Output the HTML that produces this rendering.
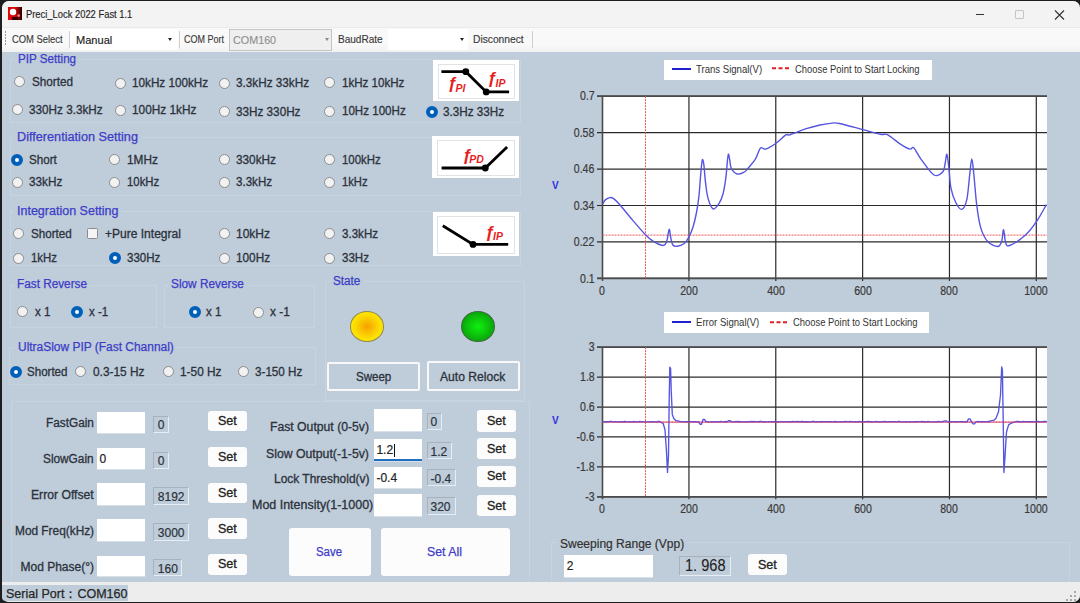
<!DOCTYPE html>
<html><head><meta charset="utf-8">
<style>
*{margin:0;padding:0;box-sizing:border-box}
html,body{width:1080px;height:603px;overflow:hidden;background:#1e1e1e;font-family:"Liberation Sans",sans-serif}
#page{position:relative;width:1080px;height:603px;overflow:hidden}
.a{position:absolute;white-space:nowrap}
.grp{position:absolute;border:1px solid #c7d3df}
.r{position:absolute;width:11px;height:11px;border-radius:50%;background:#f2f2f2;border:1px solid #8c8c8c}
.rc{position:absolute;width:12px;height:12px;border-radius:50%;background:#fff;border:4px solid #005fb8}
.tb{position:absolute;background:#fff;box-shadow:0 1px 0 #d9e0e8}
.vb{position:absolute;border-top:1px solid #a9b2bc;border-left:1px solid #a9b2bc;border-right:1px solid #e6edf4;border-bottom:1px solid #e6edf4}
.btn{position:absolute;background:#fcfcfc;border-radius:3px}
.ax{font-size:12px;color:#3a3a3a;line-height:12px;-webkit-text-stroke:0.2px #3a3a3a;transform:scaleX(0.88)}
.leg{font-size:11px;color:#333;line-height:12px;transform:scaleX(0.87);transform-origin:0 0}
</style></head><body><div id="page">

<div class="a" style="left:1.5px;top:1.3px;width:1078px;height:600.4px;background:#bfccd9;border-radius:7px"></div>
<div class="a" style="left:1.5px;top:1.3px;width:1078px;height:25.4px;background:#f3f3f3;border-radius:7px 7px 0 0"></div>
<svg class="a" style="left:8px;top:7px" width="14" height="13.4" viewBox="0 0 14 13.4"><defs><linearGradient id="ig" x1="0" y1="0" x2="1" y2="0"><stop offset="0" stop-color="#e00808"/><stop offset="0.55" stop-color="#d00808"/><stop offset="1" stop-color="#200000"/></linearGradient></defs><rect x="0" y="0" width="14" height="13.4" fill="url(#ig)"/><rect x="4" y="10" width="6" height="3.4" fill="#1a0000" opacity="0.85"/><circle cx="5" cy="5" r="3.2" fill="#fff"/><circle cx="10.7" cy="8.6" r="1.3" fill="#ff8080"/></svg>
<div class="a" style="left:25.60px;top:6.86px;font-size:10.5px;line-height:14px;color:#1f1f1f;-webkit-text-stroke:0.15px #1f1f1f;transform:scaleX(0.8928);transform-origin:0 0;">Preci_Lock 2022 Fast 1.1</div>
<div class="a" style="left:975.5px;top:13.5px;width:8.5px;height:1.2px;background:#333"></div>
<div class="a" style="left:1015px;top:10px;width:8.5px;height:8.5px;border:1px solid #c4c4c4;border-radius:1px"></div>
<svg class="a" style="left:1054px;top:9.5px" width="11" height="10" viewBox="0 0 11 10"><path d="M1 0.5 L10 9.5 M10 0.5 L1 9.5" stroke="#333" stroke-width="1.1"/></svg>
<div class="a" style="left:1.5px;top:26.7px;width:1078px;height:25px;background:linear-gradient(#f9f9f9 0%,#f9f9f9 70%,#f1f1f1 100%);border-top:1px solid #e9e9e9"></div>
<div class="a" style="left:4.5px;top:31px;width:1.5px;height:1.5px;background:#999"></div>
<div class="a" style="left:4.5px;top:34px;width:1.5px;height:1.5px;background:#999"></div>
<div class="a" style="left:4.5px;top:37px;width:1.5px;height:1.5px;background:#999"></div>
<div class="a" style="left:4.5px;top:40px;width:1.5px;height:1.5px;background:#999"></div>
<div class="a" style="left:4.5px;top:43px;width:1.5px;height:1.5px;background:#999"></div>
<div class="a" style="left:11.90px;top:32.46px;font-size:10.5px;line-height:14px;color:#3a3a3a;-webkit-text-stroke:0.15px #3a3a3a;transform:scaleX(0.8941);transform-origin:0 0;">COM Select</div>
<div class="a" style="left:69px;top:31px;width:1px;height:17px;background:#cfcfcf"></div>
<div class="a" style="left:70px;top:29px;width:108px;height:21px;background:#fff"></div>
<div class="a" style="left:75.60px;top:32.94px;font-size:11px;line-height:14px;color:#222;-webkit-text-stroke:0.15px #222;transform:scaleX(1.0061);transform-origin:0 0;">Manual</div>
<div class="a" style="left:167.5px;top:38px;width:0;height:0;border-left:2.5px solid transparent;border-right:2.5px solid transparent;border-top:3px solid #222"></div>
<div class="a" style="left:179px;top:31px;width:1px;height:17px;background:#cfcfcf"></div>
<div class="a" style="left:184.00px;top:32.46px;font-size:10.5px;line-height:14px;color:#3a3a3a;-webkit-text-stroke:0.15px #3a3a3a;transform:scaleX(0.8570);transform-origin:0 0;">COM Port</div>
<div class="a" style="left:229px;top:29px;width:103px;height:21.5px;background:#efefef;border:1px solid #c4c4c4"></div>
<div class="a" style="left:232.50px;top:32.69px;font-size:11px;line-height:14px;color:#8d8d8d;-webkit-text-stroke:0.1px #8d8d8d;transform:scaleX(0.9795);transform-origin:0 0;">COM160</div>
<div class="a" style="left:324.5px;top:38px;width:0;height:0;border-left:2.5px solid transparent;border-right:2.5px solid transparent;border-top:3px solid #888"></div>
<div class="a" style="left:337.80px;top:32.46px;font-size:10.5px;line-height:14px;color:#3a3a3a;-webkit-text-stroke:0.15px #3a3a3a;transform:scaleX(0.9567);transform-origin:0 0;">BaudRate</div>
<div class="a" style="left:388px;top:29px;width:80px;height:21px;background:#fff"></div>
<div class="a" style="left:459.5px;top:38px;width:0;height:0;border-left:2.5px solid transparent;border-right:2.5px solid transparent;border-top:3px solid #222"></div>
<div class="a" style="left:473.00px;top:32.46px;font-size:10.5px;line-height:14px;color:#3a3a3a;-webkit-text-stroke:0.15px #3a3a3a;transform:scaleX(0.9745);transform-origin:0 0;">Disconnect</div>
<div class="a" style="left:531.5px;top:31px;width:1px;height:17px;background:#cfcfcf"></div>
<div class="grp" style="left:10px;top:59px;width:511px;height:64px"></div>
<div class="a" style="left:14.899999999999999px;top:52px;width:64.1px;height:13px;background:#bfccd9"></div>
<div class="a" style="left:17.90px;top:50.84px;font-size:12px;line-height:16px;color:#3c3cc8;-webkit-text-stroke:0.25px #3c3cc8;transform:scaleX(0.9712);transform-origin:0 0;">PIP Setting</div>
<div class="r" style="left:14.0px;top:76.1px"></div>
<div class="a" style="left:31.50px;top:73.64px;font-size:12px;line-height:16px;color:#2b323c;-webkit-text-stroke:0.3px #2b323c;transform:scaleX(0.9748);transform-origin:0 0;">Shorted</div>
<div class="r" style="left:114.8px;top:77.6px"></div>
<div class="a" style="left:132.40px;top:75.44px;font-size:12px;line-height:16px;color:#2b323c;-webkit-text-stroke:0.3px #2b323c;transform:scaleX(0.9762);transform-origin:0 0;">10kHz 100kHz</div>
<div class="r" style="left:218.5px;top:77.5px"></div>
<div class="a" style="left:236.30px;top:75.34px;font-size:12px;line-height:16px;color:#2b323c;-webkit-text-stroke:0.3px #2b323c;transform:scaleX(0.9772);transform-origin:0 0;">3.3kHz 33kHz</div>
<div class="r" style="left:323.9px;top:77.0px"></div>
<div class="a" style="left:341.60px;top:74.84px;font-size:12px;line-height:16px;color:#2b323c;-webkit-text-stroke:0.3px #2b323c;transform:scaleX(0.9647);transform-origin:0 0;">1kHz 10kHz</div>
<div class="r" style="left:12.0px;top:104.3px"></div>
<div class="a" style="left:29.20px;top:102.34px;font-size:12px;line-height:16px;color:#2b323c;-webkit-text-stroke:0.3px #2b323c;transform:scaleX(0.9780);transform-origin:0 0;">330Hz 3.3kHz</div>
<div class="r" style="left:115.0px;top:104.6px"></div>
<div class="a" style="left:132.40px;top:102.44px;font-size:12px;line-height:16px;color:#2b323c;-webkit-text-stroke:0.3px #2b323c;transform:scaleX(0.9871);transform-origin:0 0;">100Hz 1kHz</div>
<div class="r" style="left:218.5px;top:106.3px"></div>
<div class="a" style="left:236.30px;top:104.14px;font-size:12px;line-height:16px;color:#2b323c;-webkit-text-stroke:0.3px #2b323c;transform:scaleX(0.9764);transform-origin:0 0;">33Hz 330Hz</div>
<div class="r" style="left:323.9px;top:105.5px"></div>
<div class="a" style="left:341.60px;top:103.34px;font-size:12px;line-height:16px;color:#2b323c;-webkit-text-stroke:0.3px #2b323c;transform:scaleX(0.9643);transform-origin:0 0;">10Hz 100Hz</div>
<div class="rc" style="left:426px;top:105.5px"></div>
<div class="a" style="left:443.40px;top:103.84px;font-size:12px;line-height:16px;color:#2b323c;-webkit-text-stroke:0.3px #2b323c;transform:scaleX(0.9745);transform-origin:0 0;">3.3Hz 33Hz</div>
<div class="grp" style="left:10px;top:137px;width:511px;height:59px"></div>
<div class="a" style="left:14px;top:129.7px;width:127px;height:13px;background:#bfccd9"></div>
<div class="a" style="left:17.00px;top:128.54px;font-size:12px;line-height:16px;color:#3c3cc8;-webkit-text-stroke:0.25px #3c3cc8;transform:scaleX(1.0564);transform-origin:0 0;">Differentiation Setting</div>
<div class="rc" style="left:11px;top:153.6px"></div>
<div class="a" style="left:28.70px;top:151.94px;font-size:12px;line-height:16px;color:#2b323c;-webkit-text-stroke:0.3px #2b323c;transform:scaleX(0.9693);transform-origin:0 0;">Short</div>
<div class="r" style="left:109.3px;top:154.1px"></div>
<div class="a" style="left:127.40px;top:151.94px;font-size:12px;line-height:16px;color:#2b323c;-webkit-text-stroke:0.3px #2b323c;transform:scaleX(0.9866);transform-origin:0 0;">1MHz</div>
<div class="r" style="left:218.5px;top:154.1px"></div>
<div class="a" style="left:236.00px;top:151.94px;font-size:12px;line-height:16px;color:#2b323c;-webkit-text-stroke:0.3px #2b323c;transform:scaleX(0.9833);transform-origin:0 0;">330kHz</div>
<div class="r" style="left:323.5px;top:154.1px"></div>
<div class="a" style="left:341.70px;top:151.94px;font-size:12px;line-height:16px;color:#2b323c;-webkit-text-stroke:0.3px #2b323c;transform:scaleX(0.9538);transform-origin:0 0;">100kHz</div>
<div class="r" style="left:11.5px;top:176.5px"></div>
<div class="a" style="left:28.70px;top:174.34px;font-size:12px;line-height:16px;color:#2b323c;-webkit-text-stroke:0.3px #2b323c;transform:scaleX(0.9788);transform-origin:0 0;">33kHz</div>
<div class="r" style="left:109.3px;top:176.5px"></div>
<div class="a" style="left:127.40px;top:174.34px;font-size:12px;line-height:16px;color:#2b323c;-webkit-text-stroke:0.3px #2b323c;transform:scaleX(0.9465);transform-origin:0 0;">10kHz</div>
<div class="r" style="left:218.5px;top:176.5px"></div>
<div class="a" style="left:236.00px;top:174.34px;font-size:12px;line-height:16px;color:#2b323c;-webkit-text-stroke:0.3px #2b323c;transform:scaleX(0.9646);transform-origin:0 0;">3.3kHz</div>
<div class="r" style="left:323.5px;top:176.5px"></div>
<div class="a" style="left:341.70px;top:174.34px;font-size:12px;line-height:16px;color:#2b323c;-webkit-text-stroke:0.3px #2b323c;transform:scaleX(0.9320);transform-origin:0 0;">1kHz</div>
<div class="grp" style="left:10px;top:211px;width:511px;height:55px"></div>
<div class="a" style="left:14px;top:204.4px;width:107.5px;height:13px;background:#bfccd9"></div>
<div class="a" style="left:17.00px;top:203.24px;font-size:12px;line-height:16px;color:#3c3cc8;-webkit-text-stroke:0.25px #3c3cc8;transform:scaleX(1.0423);transform-origin:0 0;">Integration Setting</div>
<div class="r" style="left:13.0px;top:228.4px"></div>
<div class="a" style="left:30.50px;top:226.24px;font-size:12px;line-height:16px;color:#2b323c;-webkit-text-stroke:0.3px #2b323c;transform:scaleX(0.9700);transform-origin:0 0;">Shorted</div>
<div class="a" style="left:87px;top:228.3px;width:10.5px;height:10.5px;background:#f4f4f4;border:1px solid #8c8c8c;border-radius:1.5px"></div>
<div class="a" style="left:104.60px;top:226.24px;font-size:12px;line-height:16px;color:#2b323c;-webkit-text-stroke:0.3px #2b323c;transform:scaleX(1.0024);transform-origin:0 0;">+Pure Integral</div>
<div class="r" style="left:218.5px;top:228.4px"></div>
<div class="a" style="left:236.00px;top:226.24px;font-size:12px;line-height:16px;color:#2b323c;-webkit-text-stroke:0.3px #2b323c;transform:scaleX(0.9994);transform-origin:0 0;">10kHz</div>
<div class="r" style="left:323.5px;top:228.4px"></div>
<div class="a" style="left:341.50px;top:226.24px;font-size:12px;line-height:16px;color:#2b323c;-webkit-text-stroke:0.3px #2b323c;transform:scaleX(0.9646);transform-origin:0 0;">3.3kHz</div>
<div class="r" style="left:13.0px;top:252.5px"></div>
<div class="a" style="left:30.50px;top:250.34px;font-size:12px;line-height:16px;color:#2b323c;-webkit-text-stroke:0.3px #2b323c;transform:scaleX(0.9503);transform-origin:0 0;">1kHz</div>
<div class="rc" style="left:108.8px;top:252px"></div>
<div class="a" style="left:127.40px;top:250.34px;font-size:12px;line-height:16px;color:#2b323c;-webkit-text-stroke:0.3px #2b323c;transform:scaleX(0.9602);transform-origin:0 0;">330Hz</div>
<div class="r" style="left:218.5px;top:252.5px"></div>
<div class="a" style="left:236.00px;top:250.34px;font-size:12px;line-height:16px;color:#2b323c;-webkit-text-stroke:0.3px #2b323c;transform:scaleX(0.9804);transform-origin:0 0;">100Hz</div>
<div class="r" style="left:323.5px;top:252.5px"></div>
<div class="a" style="left:341.50px;top:250.34px;font-size:12px;line-height:16px;color:#2b323c;-webkit-text-stroke:0.3px #2b323c;transform:scaleX(0.9636);transform-origin:0 0;">33Hz</div>
<div class="a" style="left:433.2px;top:59.5px;width:86.20px;height:41.30px;background:#fff"></div>
<div class="a" style="left:437.7px;top:63.5px;width:77.20px;height:35.30px;border:1px solid #e2e2e2"></div>
<svg class="a" style="left:0;top:0" width="1080" height="603"><path d="M441.4 71.7 H465.8 L486.2 91.9 H509.1" fill="none" stroke="#000" stroke-width="2.8"/><circle cx="465.8" cy="71.7" r="3.4" fill="#000"/><circle cx="486.2" cy="91.9" r="3.4" fill="#000"/><text x="447.6" y="88.5" style="font-family:'Liberation Sans',sans-serif;font-style:italic;font-weight:bold;fill:#e81e1e;font-size:17px">&#402;</text><text x="455.6" y="91.9" style="font-family:'Liberation Sans',sans-serif;font-style:italic;font-weight:bold;fill:#e81e1e;font-size:10.5px">PI</text><text x="487.2" y="84" style="font-family:'Liberation Sans',sans-serif;font-style:italic;font-weight:bold;fill:#e81e1e;font-size:17px">&#402;</text><text x="495.6" y="87.0" style="font-family:'Liberation Sans',sans-serif;font-style:italic;font-weight:bold;fill:#e81e1e;font-size:10.5px">IP</text></svg>
<div class="a" style="left:432.4px;top:136.2px;width:87.00px;height:42.30px;background:#fff"></div>
<div class="a" style="left:436.9px;top:140.2px;width:78.00px;height:36.30px;border:1px solid #e2e2e2"></div>
<svg class="a" style="left:0;top:0" width="1080" height="603"><path d="M441.6 168 H485.3 L507.1 147" fill="none" stroke="#000" stroke-width="2.8"/><circle cx="485.3" cy="168" r="3.4" fill="#000"/><text x="462.3" y="160.8" style="font-family:'Liberation Sans',sans-serif;font-style:italic;font-weight:bold;fill:#e81e1e;font-size:17px">&#402;</text><text x="469.3" y="163.3" style="font-family:'Liberation Sans',sans-serif;font-style:italic;font-weight:bold;fill:#e81e1e;font-size:10.5px">PD</text></svg>
<div class="a" style="left:432.9px;top:212px;width:86.50px;height:44.30px;background:#fff"></div>
<div class="a" style="left:437.4px;top:216px;width:77.50px;height:38.30px;border:1px solid #e2e2e2"></div>
<svg class="a" style="left:0;top:0" width="1080" height="603"><path d="M442.8 225.7 L473 244.4 H508.2" fill="none" stroke="#000" stroke-width="2.8"/><circle cx="473" cy="244.4" r="3.4" fill="#000"/><text x="484.9" y="238" style="font-family:'Liberation Sans',sans-serif;font-style:italic;font-weight:bold;fill:#e81e1e;font-size:17px">&#402;</text><text x="493" y="240.4" style="font-family:'Liberation Sans',sans-serif;font-style:italic;font-weight:bold;fill:#e81e1e;font-size:10.5px">IP</text></svg>
<div class="grp" style="left:10px;top:285px;width:147px;height:43px"></div>
<div class="a" style="left:14px;top:277px;width:76px;height:13px;background:#bfccd9"></div>
<div class="a" style="left:17.00px;top:275.84px;font-size:12px;line-height:16px;color:#3c3cc8;-webkit-text-stroke:0.25px #3c3cc8;transform:scaleX(0.9812);transform-origin:0 0;">Fast Reverse</div>
<div class="r" style="left:17.3px;top:306.1px"></div>
<div class="a" style="left:34.60px;top:303.94px;font-size:12px;line-height:16px;color:#2b323c;-webkit-text-stroke:0.3px #2b323c;transform:scaleX(0.9613);transform-origin:0 0;">x 1</div>
<div class="rc" style="left:71.4px;top:305.6px"></div>
<div class="a" style="left:89.40px;top:303.94px;font-size:12px;line-height:16px;color:#2b323c;-webkit-text-stroke:0.3px #2b323c;transform:scaleX(0.9610);transform-origin:0 0;">x -1</div>
<div class="grp" style="left:163.5px;top:285px;width:151.5px;height:43px"></div>
<div class="a" style="left:168.3px;top:277px;width:78.89999999999998px;height:13px;background:#bfccd9"></div>
<div class="a" style="left:171.30px;top:275.84px;font-size:12px;line-height:16px;color:#3c3cc8;-webkit-text-stroke:0.25px #3c3cc8;transform:scaleX(0.9846);transform-origin:0 0;">Slow Reverse</div>
<div class="rc" style="left:188.7px;top:306px"></div>
<div class="a" style="left:206.30px;top:304.34px;font-size:12px;line-height:16px;color:#2b323c;-webkit-text-stroke:0.3px #2b323c;transform:scaleX(0.9613);transform-origin:0 0;">x 1</div>
<div class="r" style="left:252.8px;top:306.5px"></div>
<div class="a" style="left:269.70px;top:304.34px;font-size:12px;line-height:16px;color:#2b323c;-webkit-text-stroke:0.3px #2b323c;transform:scaleX(1.0010);transform-origin:0 0;">x -1</div>
<div class="grp" style="left:9px;top:347px;width:306.5px;height:38px"></div>
<div class="a" style="left:14.5px;top:340px;width:161.8px;height:13px;background:#bfccd9"></div>
<div class="a" style="left:17.50px;top:338.84px;font-size:12px;line-height:16px;color:#3c3cc8;-webkit-text-stroke:0.25px #3c3cc8;transform:scaleX(0.9957);transform-origin:0 0;">UltraSlow PIP (Fast Channal)</div>
<div class="rc" style="left:9.6px;top:365.7px"></div>
<div class="a" style="left:27.40px;top:364.04px;font-size:12px;line-height:16px;color:#2b323c;-webkit-text-stroke:0.3px #2b323c;transform:scaleX(0.9629);transform-origin:0 0;">Shorted</div>
<div class="r" style="left:75.2px;top:366.2px"></div>
<div class="a" style="left:93.00px;top:364.04px;font-size:12px;line-height:16px;color:#2b323c;-webkit-text-stroke:0.3px #2b323c;transform:scaleX(0.9881);transform-origin:0 0;">0.3-15 Hz</div>
<div class="r" style="left:162.5px;top:366.2px"></div>
<div class="a" style="left:180.10px;top:364.04px;font-size:12px;line-height:16px;color:#2b323c;-webkit-text-stroke:0.3px #2b323c;transform:scaleX(0.9881);transform-origin:0 0;">1-50 Hz</div>
<div class="r" style="left:237.5px;top:366.2px"></div>
<div class="a" style="left:255.40px;top:364.04px;font-size:12px;line-height:16px;color:#2b323c;-webkit-text-stroke:0.3px #2b323c;transform:scaleX(0.9729);transform-origin:0 0;">3-150 Hz</div>
<div class="grp" style="left:324.8px;top:280.8px;width:199.8px;height:120.19999999999999px"></div>
<div class="a" style="left:329.5px;top:274.1px;width:33.30000000000001px;height:13px;background:#bfccd9"></div>
<div class="a" style="left:332.50px;top:272.94px;font-size:12px;line-height:16px;color:#3c3cc8;-webkit-text-stroke:0.25px #3c3cc8;transform:scaleX(0.9743);transform-origin:0 0;">State</div>
<div class="a" style="left:349.5px;top:311px;width:34.5px;height:31.2px;border-radius:50%;border:1.3px solid #8c8a52;background:radial-gradient(ellipse at 50% 50%,#f6a000 0%,#f9c200 30%,#fde000 60%,#ffe800 100%)"></div>
<div class="a" style="left:460.6px;top:311px;width:34.2px;height:31.2px;border-radius:50%;border:1.3px solid #3a6a3a;background:radial-gradient(ellipse at 50% 50%,#10f010 0%,#0cc80c 40%,#089808 85%,#087a10 100%)"></div>
<div class="a" style="left:327.3px;top:361.7px;width:93px;height:29.7px;border:2px solid #f8f8f8;border-radius:2px"></div>
<div class="a" style="left:355.70px;top:368.84px;font-size:12px;line-height:16px;color:#2b323c;-webkit-text-stroke:0.3px #2b323c;transform:scaleX(0.9613);transform-origin:0 0;">Sweep</div>
<div class="a" style="left:427.3px;top:361px;width:92.5px;height:30px;border:2px solid #f8f8f8;border-radius:2px"></div>
<div class="a" style="left:440.30px;top:368.84px;font-size:12px;line-height:16px;color:#2b323c;-webkit-text-stroke:0.3px #2b323c;transform:scaleX(1.0086);transform-origin:0 0;">Auto Relock</div>
<div class="grp" style="left:10.8px;top:400.8px;width:519.2px;height:189.2px"></div>
<div class="a" style="left:46.10px;top:414.84px;font-size:12px;line-height:16px;color:#2b323c;-webkit-text-stroke:0.3px #2b323c;transform:scaleX(0.9844);transform-origin:0 0;">FastGain</div>
<div class="tb" style="left:97.4px;top:411.7px;width:47.70px;height:21.80px;"></div>
<div class="vb" style="left:153.1px;top:415.9px;width:16.10px;height:17.20px;"></div>
<div class="a" style="left:157.80px;top:417.44px;font-size:12px;line-height:16px;color:#2b323c;-webkit-text-stroke:0.2px #2b323c;transform:scaleX(1.0000);transform-origin:0 0;">0</div>
<div class="btn" style="left:208.2px;top:410.5px;width:39.00px;height:20.90px;"></div>
<div class="a" style="left:218.30px;top:413.09px;font-size:12px;line-height:16px;color:#222;-webkit-text-stroke:0.3px #222;transform:scaleX(1.0444);transform-origin:0 0;">Set</div>
<div class="a" style="left:43.40px;top:450.94px;font-size:12px;line-height:16px;color:#2b323c;-webkit-text-stroke:0.3px #2b323c;transform:scaleX(0.9852);transform-origin:0 0;">SlowGain</div>
<div class="tb" style="left:97.4px;top:447.8px;width:47.70px;height:21.40px;"></div>
<div class="a" style="left:99.40px;top:450.94px;font-size:12px;line-height:16px;color:#222;-webkit-text-stroke:0.2px #222;transform:scaleX(1.0000);transform-origin:0 0;">0</div>
<div class="vb" style="left:153.1px;top:451.6px;width:16.10px;height:17.60px;"></div>
<div class="a" style="left:157.80px;top:453.14px;font-size:12px;line-height:16px;color:#2b323c;-webkit-text-stroke:0.2px #2b323c;transform:scaleX(1.0000);transform-origin:0 0;">0</div>
<div class="btn" style="left:208.2px;top:446.6px;width:39.00px;height:20.90px;"></div>
<div class="a" style="left:218.30px;top:449.19px;font-size:12px;line-height:16px;color:#222;-webkit-text-stroke:0.3px #222;transform:scaleX(1.0444);transform-origin:0 0;">Set</div>
<div class="a" style="left:31.30px;top:486.54px;font-size:12px;line-height:16px;color:#2b323c;-webkit-text-stroke:0.3px #2b323c;transform:scaleX(1.0146);transform-origin:0 0;">Error Offset</div>
<div class="tb" style="left:97.4px;top:483.2px;width:47.70px;height:21.70px;"></div>
<div class="vb" style="left:153.1px;top:487.3px;width:36.40px;height:17.70px;"></div>
<div class="a" style="left:157.80px;top:488.84px;font-size:12px;line-height:16px;color:#2b323c;-webkit-text-stroke:0.2px #2b323c;transform:scaleX(1.0000);transform-origin:0 0;">8192</div>
<div class="btn" style="left:208.2px;top:482.5px;width:39.00px;height:20.50px;"></div>
<div class="a" style="left:218.30px;top:484.89px;font-size:12px;line-height:16px;color:#222;-webkit-text-stroke:0.3px #222;transform:scaleX(1.0444);transform-origin:0 0;">Set</div>
<div class="a" style="left:14.90px;top:522.64px;font-size:12px;line-height:16px;color:#2b323c;-webkit-text-stroke:0.3px #2b323c;transform:scaleX(0.9883);transform-origin:0 0;">Mod Freq(kHz)</div>
<div class="tb" style="left:97.4px;top:519.3px;width:47.70px;height:21.70px;"></div>
<div class="vb" style="left:153.1px;top:523.4px;width:36.40px;height:17.60px;"></div>
<div class="a" style="left:157.80px;top:524.94px;font-size:12px;line-height:16px;color:#2b323c;-webkit-text-stroke:0.2px #2b323c;transform:scaleX(1.0000);transform-origin:0 0;">3000</div>
<div class="btn" style="left:208.2px;top:518.1px;width:39.00px;height:21.00px;"></div>
<div class="a" style="left:218.30px;top:520.74px;font-size:12px;line-height:16px;color:#222;-webkit-text-stroke:0.3px #222;transform:scaleX(1.0444);transform-origin:0 0;">Set</div>
<div class="a" style="left:20.50px;top:558.74px;font-size:12px;line-height:16px;color:#2b323c;-webkit-text-stroke:0.3px #2b323c;transform:scaleX(1.0000);transform-origin:0 0;">Mod Phase(°)</div>
<div class="tb" style="left:97.4px;top:555.5px;width:47.70px;height:20.90px;"></div>
<div class="vb" style="left:153.1px;top:559px;width:29.10px;height:17.40px;"></div>
<div class="a" style="left:157.80px;top:560.54px;font-size:12px;line-height:16px;color:#2b323c;-webkit-text-stroke:0.2px #2b323c;transform:scaleX(1.0000);transform-origin:0 0;">160</div>
<div class="btn" style="left:208.2px;top:553.8px;width:39.00px;height:20.90px;"></div>
<div class="a" style="left:218.30px;top:556.39px;font-size:12px;line-height:16px;color:#222;-webkit-text-stroke:0.3px #222;transform:scaleX(1.0444);transform-origin:0 0;">Set</div>
<div class="a" style="left:270.00px;top:418.84px;font-size:12px;line-height:16px;color:#2b323c;-webkit-text-stroke:0.3px #2b323c;transform:scaleX(1.0166);transform-origin:0 0;">Fast Output (0-5v)</div>
<div class="tb" style="left:374.3px;top:409.2px;width:47.50px;height:21.90px;"></div>
<div class="vb" style="left:426.6px;top:412.7px;width:15.00px;height:17.70px;"></div>
<div class="a" style="left:430.50px;top:414.24px;font-size:12px;line-height:16px;color:#2b323c;-webkit-text-stroke:0.2px #2b323c;transform:scaleX(1.0000);transform-origin:0 0;">0</div>
<div class="btn" style="left:477.3px;top:410px;width:39.00px;height:21.70px;"></div>
<div class="a" style="left:487.40px;top:412.99px;font-size:12px;line-height:16px;color:#222;-webkit-text-stroke:0.3px #222;transform:scaleX(1.0444);transform-origin:0 0;">Set</div>
<div class="a" style="left:266.10px;top:446.04px;font-size:12px;line-height:16px;color:#2b323c;-webkit-text-stroke:0.3px #2b323c;transform:scaleX(1.0221);transform-origin:0 0;">Slow Output(-1-5v)</div>
<div class="tb" style="left:374.3px;top:439px;width:47.50px;height:21.70px;"></div>
<div class="a" style="left:376.40px;top:442.14px;font-size:12px;line-height:16px;color:#222;-webkit-text-stroke:0.2px #222;transform:scaleX(1.0000);transform-origin:0 0;">1.2</div>
<div class="vb" style="left:426.6px;top:442.2px;width:25.60px;height:16.40px;"></div>
<div class="a" style="left:430.50px;top:443.74px;font-size:12px;line-height:16px;color:#2b323c;-webkit-text-stroke:0.2px #2b323c;transform:scaleX(1.0000);transform-origin:0 0;">1.2</div>
<div class="btn" style="left:477.3px;top:438.3px;width:39.00px;height:20.30px;"></div>
<div class="a" style="left:487.40px;top:440.59px;font-size:12px;line-height:16px;color:#222;-webkit-text-stroke:0.3px #222;transform:scaleX(1.0444);transform-origin:0 0;">Set</div>
<div class="a" style="left:273.50px;top:471.04px;font-size:12px;line-height:16px;color:#2b323c;-webkit-text-stroke:0.3px #2b323c;transform:scaleX(0.9967);transform-origin:0 0;">Lock Threshold(v)</div>
<div class="tb" style="left:374.3px;top:467.3px;width:47.50px;height:21.10px;"></div>
<div class="a" style="left:376.40px;top:470.44px;font-size:12px;line-height:16px;color:#222;-webkit-text-stroke:0.2px #222;transform:scaleX(1.0000);transform-origin:0 0;">-0.4</div>
<div class="vb" style="left:426.6px;top:469.1px;width:29.50px;height:16.70px;"></div>
<div class="a" style="left:430.50px;top:470.64px;font-size:12px;line-height:16px;color:#2b323c;-webkit-text-stroke:0.2px #2b323c;transform:scaleX(1.0000);transform-origin:0 0;">-0.4</div>
<div class="btn" style="left:477.3px;top:465.5px;width:39.00px;height:21.10px;"></div>
<div class="a" style="left:487.40px;top:468.19px;font-size:12px;line-height:16px;color:#222;-webkit-text-stroke:0.3px #222;transform:scaleX(1.0444);transform-origin:0 0;">Set</div>
<div class="a" style="left:252.10px;top:497.24px;font-size:12px;line-height:16px;color:#2b323c;-webkit-text-stroke:0.3px #2b323c;transform:scaleX(1.0386);transform-origin:0 0;">Mod Intensity(1-1000)</div>
<div class="tb" style="left:374.3px;top:493.7px;width:47.50px;height:21.90px;"></div>
<div class="vb" style="left:426.6px;top:497.1px;width:29.50px;height:17.70px;"></div>
<div class="a" style="left:430.50px;top:498.64px;font-size:12px;line-height:16px;color:#2b323c;-webkit-text-stroke:0.2px #2b323c;transform:scaleX(1.0000);transform-origin:0 0;">320</div>
<div class="btn" style="left:477.3px;top:495px;width:39.00px;height:21.10px;"></div>
<div class="a" style="left:487.40px;top:497.69px;font-size:12px;line-height:16px;color:#222;-webkit-text-stroke:0.3px #222;transform:scaleX(1.0444);transform-origin:0 0;">Set</div>
<div class="a" style="left:374.3px;top:459px;width:47.5px;height:2px;background:#1f6fc0"></div>
<div class="a" style="left:394px;top:444px;width:1px;height:13px;background:#111"></div>
<div class="btn" style="left:288.75px;top:527.5px;width:82.50px;height:48.00px;"></div>
<div class="a" style="left:316.00px;top:544.34px;font-size:12px;line-height:16px;color:#3c3cc8;-webkit-text-stroke:0.25px #3c3cc8;transform:scaleX(0.9503);transform-origin:0 0;">Save</div>
<div class="btn" style="left:380.75px;top:527.5px;width:128.75px;height:48.00px;"></div>
<div class="a" style="left:427.00px;top:544.34px;font-size:12px;line-height:16px;color:#3c3cc8;-webkit-text-stroke:0.25px #3c3cc8;transform:scaleX(1.0288);transform-origin:0 0;">Set All</div>
<div class="grp" style="left:551px;top:542px;width:519px;height:48px"></div>
<div class="a" style="left:557px;top:536px;width:130px;height:13px;background:#bfccd9"></div>
<div class="a" style="left:559.90px;top:535.74px;font-size:12px;line-height:16px;color:#333;-webkit-text-stroke:0.2px #333;transform:scaleX(1.0010);transform-origin:0 0;">Sweeping Range (Vpp)</div>
<div class="tb" style="left:564.3px;top:555.1px;width:88.30px;height:21.70px;"></div>
<div class="a" style="left:566.70px;top:558.24px;font-size:12px;line-height:16px;color:#222;-webkit-text-stroke:0.2px #222;transform:scaleX(1.0000);transform-origin:0 0;">2</div>
<div class="vb" style="left:679.1px;top:556.2px;width:51.80px;height:19.40px;"></div>
<div class="a" style="left:684.60px;top:555.11px;font-size:17px;line-height:22px;color:#222;-webkit-text-stroke:0.1px #222;transform:scaleX(0.8570);transform-origin:0 0;">1. 968</div>
<div class="btn" style="left:747.9px;top:554.4px;width:39.00px;height:20.70px;"></div>
<div class="a" style="left:758.00px;top:556.89px;font-size:12px;line-height:16px;color:#222;-webkit-text-stroke:0.3px #222;transform:scaleX(1.0444);transform-origin:0 0;">Set</div>
<div class="a" style="left:1.5px;top:582px;width:1078px;height:19.7px;background:#ededed;border-radius:0 0 7px 7px"></div>
<div class="a" style="left:1.5px;top:584.5px;width:126.5px;height:16.5px;background:#bfccd9;border-radius:0 0 0 4px"></div>
<div class="a" style="left:5.90px;top:585.67px;font-size:12.5px;line-height:16px;color:#262626;-webkit-text-stroke:0.25px #262626;transform:scaleX(1.0004);transform-origin:0 0;">Serial Port：COM160</div>
<div class="a" style="left:1074px;top:591px;width:1.5px;height:1.5px;background:#a8a8a8"></div>
<div class="a" style="left:1070px;top:595px;width:1.5px;height:1.5px;background:#a8a8a8"></div>
<div class="a" style="left:1074px;top:595px;width:1.5px;height:1.5px;background:#a8a8a8"></div>
<div class="a" style="left:1066px;top:599px;width:1.5px;height:1.5px;background:#a8a8a8"></div>
<div class="a" style="left:1070px;top:599px;width:1.5px;height:1.5px;background:#a8a8a8"></div>
<div class="a" style="left:1074px;top:599px;width:1.5px;height:1.5px;background:#a8a8a8"></div>
<div class="a" style="left:664.25px;top:59.5px;width:267.5px;height:20px;background:#fff"></div>
<div class="a" style="left:672px;top:67.5px;width:18.75px;height:2px;background:#2020cc"></div>
<div class="a leg" style="left:695.5px;top:62.7px">Trans Signal(V)</div>
<svg class="a" style="left:772px;top:67px" width="19" height="3"><path d="M0 1.25 H19" stroke="#e02020" stroke-width="2" stroke-dasharray="4 2.5"/></svg>
<div class="a leg" style="left:795px;top:62.7px;transform:scaleX(0.856)">Choose Point to Start Locking</div>
<div class="a" style="left:664.25px;top:312px;width:264.7px;height:20.5px;background:#fff"></div>
<div class="a" style="left:672px;top:321.2px;width:18.75px;height:2px;background:#2020cc"></div>
<div class="a leg" style="left:695.5px;top:316.2px">Error Signal(V)</div>
<svg class="a" style="left:769.5px;top:320.7px" width="19" height="3"><path d="M0 1.25 H19" stroke="#e02020" stroke-width="2" stroke-dasharray="4 2.5"/></svg>
<div class="a leg" style="left:792.5px;top:316.2px;transform:scaleX(0.856)">Choose Point to Start Locking</div>
<div class="a" style="left:552px;top:180px;font-size:10px;font-weight:bold;color:#3030e0;line-height:12px">V</div>
<div class="a" style="left:552px;top:414.5px;font-size:10px;font-weight:bold;color:#3030e0;line-height:12px">V</div>
<svg class="a" style="left:0;top:0" width="1080" height="603" viewBox="0 0 1080 603">
<rect x="602.5" y="96.2" width="444.5" height="182.2" fill="#fff"/>
<line x1="688.94" y1="96.2" x2="688.94" y2="280.9" stroke="#2a2a2a" stroke-width="1.2"/>
<line x1="775.78" y1="96.2" x2="775.78" y2="280.9" stroke="#2a2a2a" stroke-width="1.2"/>
<line x1="862.62" y1="96.2" x2="862.62" y2="280.9" stroke="#2a2a2a" stroke-width="1.2"/>
<line x1="949.46" y1="96.2" x2="949.46" y2="280.9" stroke="#2a2a2a" stroke-width="1.2"/>
<line x1="1036.30" y1="96.2" x2="1036.30" y2="280.9" stroke="#2a2a2a" stroke-width="1.2"/>
<line x1="597.0" y1="96.20" x2="1047.0" y2="96.20" stroke="#2a2a2a" stroke-width="1.2"/>
<line x1="597.0" y1="132.64" x2="1047.0" y2="132.64" stroke="#2a2a2a" stroke-width="1.2"/>
<line x1="597.0" y1="169.08" x2="1047.0" y2="169.08" stroke="#2a2a2a" stroke-width="1.2"/>
<line x1="597.0" y1="205.52" x2="1047.0" y2="205.52" stroke="#2a2a2a" stroke-width="1.2"/>
<line x1="597.0" y1="241.96" x2="1047.0" y2="241.96" stroke="#2a2a2a" stroke-width="1.2"/>
<line x1="597.0" y1="278.40" x2="1047.0" y2="278.40" stroke="#2a2a2a" stroke-width="1.2"/>
<line x1="602.5" y1="96.2" x2="602.5" y2="280.9" stroke="#4a4a4a" stroke-width="1.6"/>
<line x1="597.0" y1="278.4" x2="1047.0" y2="278.4" stroke="#4a4a4a" stroke-width="1.6"/>
<line x1="597.0" y1="96.2" x2="1047.0" y2="96.2" stroke="#4a4a4a" stroke-width="1.6"/>
<line x1="645.52" y1="96.2" x2="645.52" y2="278.4" stroke="#ee5555" stroke-width="1" stroke-dasharray="2 1"/>
<line x1="602.5" y1="235.1" x2="1047.0" y2="235.1" stroke="#ee5555" stroke-width="1" stroke-dasharray="2 1"/>
<path d="M602.90 203.80 C603.30 203.15 604.13 200.93 605.30 199.90 C606.47 198.87 608.47 197.77 609.90 197.60 C611.33 197.43 612.35 197.83 613.90 198.90 C615.45 199.97 616.32 200.73 619.20 204.00 C622.08 207.27 626.78 213.33 631.20 218.50 C635.62 223.67 641.95 231.13 645.70 235.00 C649.45 238.87 651.03 239.98 653.70 241.70 C656.37 243.42 659.77 244.87 661.70 245.30 C663.63 245.73 664.37 245.35 665.30 244.30 C666.23 243.25 666.65 241.50 667.30 239.00 C667.95 236.50 668.60 229.40 669.20 229.30 C669.80 229.20 670.28 235.78 670.90 238.40 C671.52 241.02 671.90 243.68 672.90 245.00 C673.90 246.32 675.02 246.55 676.90 246.30 C678.78 246.05 682.18 245.08 684.20 243.50 C686.22 241.92 687.52 239.58 689.00 236.80 C690.48 234.02 691.87 230.77 693.10 226.80 C694.33 222.83 695.43 218.07 696.40 213.00 C697.37 207.93 698.20 202.65 698.90 196.40 C699.60 190.15 700.10 181.15 700.60 175.50 C701.10 169.85 701.55 165.15 701.90 162.50 C702.25 159.85 702.37 159.18 702.70 159.60 C703.03 160.02 703.42 161.07 703.90 165.00 C704.38 168.93 704.92 177.68 705.60 183.20 C706.28 188.72 706.77 193.82 708.00 198.10 C709.23 202.38 711.20 207.93 713.00 208.90 C714.80 209.87 717.13 206.38 718.80 203.90 C720.47 201.42 721.83 198.28 723.00 194.00 C724.17 189.72 725.07 183.70 725.80 178.20 C726.53 172.70 726.97 165.00 727.40 161.00 C727.83 157.00 728.03 154.52 728.40 154.20 C728.77 153.88 729.12 156.77 729.60 159.10 C730.08 161.43 730.05 165.72 731.30 168.20 C732.55 170.68 734.98 173.33 737.10 174.00 C739.22 174.67 742.25 173.07 744.00 172.20 C745.75 171.33 745.68 171.02 747.60 168.80 C749.52 166.58 753.35 162.37 755.50 158.90 C757.65 155.43 758.82 149.63 760.50 148.00 C762.18 146.37 763.07 149.85 765.60 149.10 C768.13 148.35 772.32 145.88 775.70 143.50 C779.08 141.12 783.58 136.25 785.90 134.80 C788.22 133.35 786.20 135.82 789.60 134.80 C793.00 133.78 801.23 130.33 806.30 128.70 C811.37 127.07 815.68 125.93 820.00 125.00 C824.32 124.07 828.93 123.35 832.20 123.10 C835.47 122.85 834.50 122.42 839.60 123.50 C844.70 124.58 856.00 127.80 862.80 129.60 C869.60 131.40 876.23 133.43 880.40 134.30 C884.57 135.17 884.42 133.12 887.80 134.80 C891.18 136.48 897.00 142.02 900.70 144.40 C904.40 146.78 907.83 148.53 910.00 149.10 C912.17 149.67 911.85 146.10 913.70 147.80 C915.55 149.50 917.72 154.77 921.10 159.30 C924.48 163.83 930.37 172.92 934.00 175.00 C937.63 177.08 941.03 173.80 942.90 171.80 C944.77 169.80 944.53 165.92 945.20 163.00 C945.87 160.08 946.28 153.48 946.90 154.30 C947.52 155.12 948.23 162.32 948.90 167.90 C949.57 173.48 949.73 182.00 950.90 187.80 C952.07 193.60 954.08 199.12 955.90 202.70 C957.72 206.28 959.98 209.80 961.80 209.30 C963.62 208.80 965.47 205.62 966.80 199.70 C968.13 193.78 968.97 180.60 969.80 173.80 C970.63 167.00 971.13 158.90 971.80 158.90 C972.47 158.90 972.97 166.00 973.80 173.80 C974.63 181.60 975.65 196.73 976.80 205.70 C977.95 214.67 978.88 221.63 980.70 227.60 C982.52 233.57 984.87 238.35 987.70 241.50 C990.53 244.65 995.38 246.50 997.70 246.50 C1000.02 246.50 1000.62 244.32 1001.60 241.50 C1002.58 238.68 1002.93 229.43 1003.60 229.60 C1004.27 229.77 1004.60 239.85 1005.60 242.50 C1006.60 245.15 1006.28 246.73 1009.60 245.50 C1012.92 244.27 1021.02 239.08 1025.50 235.10 C1029.98 231.12 1033.02 226.67 1036.50 221.60 C1039.98 216.53 1044.75 207.52 1046.40 204.70" fill="none" stroke="#5555e2" stroke-width="1.4" stroke-linejoin="round"/>
</svg>
<div class="a ax" style="right:485.5px;top:90.30px;transform-origin:100% 50%">0.7</div>
<div class="a ax" style="right:485.5px;top:126.74px;transform-origin:100% 50%">0.58</div>
<div class="a ax" style="right:485.5px;top:163.18px;transform-origin:100% 50%">0.46</div>
<div class="a ax" style="right:485.5px;top:199.62px;transform-origin:100% 50%">0.34</div>
<div class="a ax" style="right:485.5px;top:236.06px;transform-origin:100% 50%">0.22</div>
<div class="a ax" style="right:485.5px;top:272.50px;transform-origin:100% 50%">0.1</div>
<div class="a ax" style="left:602.10px;top:284.80px;transform:translateX(-50%) scaleX(0.88)">0</div>
<div class="a ax" style="left:688.94px;top:284.80px;transform:translateX(-50%) scaleX(0.88)">200</div>
<div class="a ax" style="left:775.78px;top:284.80px;transform:translateX(-50%) scaleX(0.88)">400</div>
<div class="a ax" style="left:862.62px;top:284.80px;transform:translateX(-50%) scaleX(0.88)">600</div>
<div class="a ax" style="left:949.46px;top:284.80px;transform:translateX(-50%) scaleX(0.88)">800</div>
<div class="a ax" style="right:32.5px;top:284.80px;transform-origin:100% 50%">1000</div>
<svg class="a" style="left:0;top:0" width="1080" height="603" viewBox="0 0 1080 603">
<rect x="602.5" y="347.2" width="444.5" height="149.60000000000002" fill="#fff"/>
<line x1="688.94" y1="347.2" x2="688.94" y2="499.3" stroke="#2a2a2a" stroke-width="1.2"/>
<line x1="775.78" y1="347.2" x2="775.78" y2="499.3" stroke="#2a2a2a" stroke-width="1.2"/>
<line x1="862.62" y1="347.2" x2="862.62" y2="499.3" stroke="#2a2a2a" stroke-width="1.2"/>
<line x1="949.46" y1="347.2" x2="949.46" y2="499.3" stroke="#2a2a2a" stroke-width="1.2"/>
<line x1="1036.30" y1="347.2" x2="1036.30" y2="499.3" stroke="#2a2a2a" stroke-width="1.2"/>
<line x1="597.0" y1="347.20" x2="1047.0" y2="347.20" stroke="#2a2a2a" stroke-width="1.2"/>
<line x1="597.0" y1="377.12" x2="1047.0" y2="377.12" stroke="#2a2a2a" stroke-width="1.2"/>
<line x1="597.0" y1="407.04" x2="1047.0" y2="407.04" stroke="#2a2a2a" stroke-width="1.2"/>
<line x1="597.0" y1="436.96" x2="1047.0" y2="436.96" stroke="#2a2a2a" stroke-width="1.2"/>
<line x1="597.0" y1="466.88" x2="1047.0" y2="466.88" stroke="#2a2a2a" stroke-width="1.2"/>
<line x1="597.0" y1="496.80" x2="1047.0" y2="496.80" stroke="#2a2a2a" stroke-width="1.2"/>
<line x1="602.5" y1="347.2" x2="602.5" y2="499.3" stroke="#4a4a4a" stroke-width="1.6"/>
<line x1="597.0" y1="496.8" x2="1047.0" y2="496.8" stroke="#4a4a4a" stroke-width="1.6"/>
<line x1="597.0" y1="347.2" x2="1047.0" y2="347.2" stroke="#4a4a4a" stroke-width="1.6"/>
<line x1="645.52" y1="347.2" x2="645.52" y2="496.8" stroke="#ee5555" stroke-width="1" stroke-dasharray="2 1"/>
<line x1="602.5" y1="422.0" x2="1047.0" y2="422.0" stroke="#ee5555" stroke-width="1" stroke-dasharray="2 1"/>
<path d="M602.50 421.57 L604.00 421.72 L605.50 421.63 L607.00 421.75 L608.50 421.76 L610.00 421.48 L611.50 421.46 L613.00 421.87 L614.50 421.58 L616.00 421.57 L617.50 421.95 L619.00 421.69 L620.50 421.87 L622.00 421.69 L623.50 421.77 L625.00 421.53 L626.50 421.77 L628.00 421.88 L629.50 421.71 L631.00 421.82 L632.50 421.79 L634.00 421.48 L635.50 421.83 L637.00 421.75 L638.50 421.60 L640.00 421.47 L641.50 421.88 L643.00 421.69 L644.50 421.81 L646.00 421.89 L647.50 421.81 L649.00 421.91 L650.50 421.65 L652.00 421.85 L653.50 421.67 L655.00 421.92 L656.50 421.89 L658.00 421.50 L659.50 421.52 L661.00 422.20 L663.30 423.70 L665.00 429.70 L666.50 451.70 L667.50 472.40 L668.50 455.00 L669.20 400.00 L669.80 367.20 L670.60 368.50 L671.20 390.00 L672.30 414.40 L673.80 418.50 L675.60 420.30 L680.70 421.70 L682.00 421.56 L683.50 421.93 L685.00 421.67 L686.50 421.76 L688.00 421.60 L689.50 421.70 L691.00 421.64 L692.50 421.63 L694.00 421.74 L695.50 421.74 L697.00 421.90 L698.50 421.79 L700.00 424.20 L701.50 424.20 L703.00 419.50 L704.50 419.50 L706.00 421.53 L707.50 421.88 L709.00 421.93 L710.50 421.90 L712.00 421.73 L713.50 421.81 L715.00 421.56 L716.50 421.87 L718.00 421.74 L719.50 421.59 L721.00 421.48 L722.50 421.88 L724.00 421.94 L725.50 421.49 L727.00 421.85 L728.50 420.70 L730.00 420.70 L731.50 421.60 L733.00 421.83 L734.50 421.89 L736.00 421.47 L737.50 421.76 L739.00 421.47 L740.50 421.81 L742.00 421.62 L743.50 421.89 L745.00 421.94 L746.50 421.70 L748.00 421.95 L749.50 421.60 L751.00 421.49 L752.50 421.75 L754.00 421.47 L755.50 421.55 L757.00 421.65 L758.50 421.76 L760.00 421.53 L761.50 421.47 L763.00 421.88 L764.50 421.61 L766.00 421.93 L767.50 421.90 L769.00 421.64 L770.50 421.68 L772.00 421.71 L773.50 421.77 L775.00 421.75 L776.50 421.73 L778.00 421.76 L779.50 421.92 L781.00 421.70 L782.50 421.67 L784.00 421.81 L785.50 421.57 L787.00 421.60 L788.50 421.94 L790.00 421.71 L791.50 421.72 L793.00 421.46 L794.50 421.66 L796.00 421.74 L797.50 421.46 L799.00 421.76 L800.50 421.77 L802.00 421.48 L803.50 421.76 L805.00 421.68 L806.50 421.79 L808.00 421.63 L809.50 421.80 L811.00 421.82 L812.50 421.46 L814.00 421.48 L815.50 421.79 L817.00 421.93 L818.50 421.58 L820.00 421.68 L821.50 421.75 L823.00 421.61 L824.50 421.63 L826.00 421.61 L827.50 421.63 L829.00 421.75 L830.50 421.60 L832.00 421.64 L833.50 421.84 L835.00 421.46 L836.50 421.73 L838.00 421.82 L839.50 421.61 L841.00 421.56 L842.50 421.85 L844.00 421.57 L845.50 421.54 L847.00 421.67 L848.50 421.80 L850.00 421.50 L851.50 421.61 L853.00 421.62 L854.50 421.87 L856.00 421.67 L857.50 421.88 L859.00 421.53 L860.50 421.62 L862.00 421.78 L863.50 421.89 L865.00 421.68 L866.50 421.56 L868.00 421.51 L869.50 421.71 L871.00 421.55 L872.50 421.85 L874.00 421.87 L875.50 421.54 L877.00 421.59 L878.50 421.85 L880.00 421.77 L881.50 421.85 L883.00 421.62 L884.50 421.51 L886.00 421.60 L887.50 421.85 L889.00 421.59 L890.50 421.62 L892.00 421.66 L893.50 421.66 L895.00 421.65 L896.50 421.91 L898.00 421.53 L899.50 421.45 L901.00 421.92 L902.50 421.89 L904.00 421.94 L905.50 421.67 L907.00 421.93 L908.50 421.91 L910.00 421.56 L911.50 421.82 L913.00 421.87 L914.50 421.78 L916.00 421.71 L917.50 421.59 L919.00 421.62 L920.50 421.56 L922.00 421.48 L923.50 421.74 L925.00 421.59 L926.50 421.86 L928.00 421.47 L929.50 421.90 L931.00 421.80 L932.50 421.91 L934.00 421.90 L935.50 421.90 L937.00 421.74 L938.50 421.46 L940.00 421.82 L941.50 421.54 L943.00 421.60 L944.50 420.90 L946.00 420.90 L947.50 421.66 L949.00 421.92 L950.50 421.76 L952.00 421.62 L953.50 421.58 L955.00 421.88 L956.50 421.69 L958.00 421.84 L959.50 421.63 L961.00 421.55 L962.50 421.72 L964.00 421.86 L965.50 421.54 L967.00 421.85 L968.50 418.90 L970.00 418.90 L971.50 421.86 L973.00 423.90 L974.50 423.90 L976.00 421.88 L977.50 421.47 L979.00 421.59 L980.50 421.58 L982.00 421.71 L983.50 421.66 L985.00 421.69 L986.50 421.84 L988.00 421.45 L989.50 421.48 L990.00 421.20 L994.00 420.20 L996.00 418.20 L998.50 411.70 L1000.50 395.00 L1001.70 366.90 L1002.40 370.00 L1003.20 420.00 L1003.90 472.50 L1004.80 460.00 L1006.50 432.00 L1008.70 424.60 L1012.00 422.90 L1016.00 421.70 L1017.00 421.51 L1018.50 421.48 L1020.00 421.94 L1021.50 421.88 L1023.00 421.49 L1024.50 421.70 L1026.00 421.61 L1027.50 421.61 L1029.00 421.63 L1030.50 421.77 L1032.00 421.74 L1033.50 421.63 L1035.00 421.55 L1036.50 421.61 L1038.00 421.51 L1039.50 421.73 L1041.00 421.81 L1042.50 421.64 L1044.00 421.49 L1045.50 421.54 L1046.80 421.70" fill="none" stroke="#5555e2" stroke-width="1.35" stroke-linejoin="round"/>
<line x1="602.5" y1="422.3" x2="1047.0" y2="422.3" stroke="#d03070" stroke-opacity="0.5" stroke-width="1.6"/>
</svg>
<div class="a ax" style="right:485.5px;top:341.30px;transform-origin:100% 50%">3</div>
<div class="a ax" style="right:485.5px;top:371.22px;transform-origin:100% 50%">1.8</div>
<div class="a ax" style="right:485.5px;top:401.14px;transform-origin:100% 50%">0.6</div>
<div class="a ax" style="right:485.5px;top:431.06px;transform-origin:100% 50%">-0.6</div>
<div class="a ax" style="right:485.5px;top:460.98px;transform-origin:100% 50%">-1.8</div>
<div class="a ax" style="right:485.5px;top:490.90px;transform-origin:100% 50%">-3</div>
<div class="a ax" style="left:602.10px;top:503.20px;transform:translateX(-50%) scaleX(0.88)">0</div>
<div class="a ax" style="left:688.94px;top:503.20px;transform:translateX(-50%) scaleX(0.88)">200</div>
<div class="a ax" style="left:775.78px;top:503.20px;transform:translateX(-50%) scaleX(0.88)">400</div>
<div class="a ax" style="left:862.62px;top:503.20px;transform:translateX(-50%) scaleX(0.88)">600</div>
<div class="a ax" style="left:949.46px;top:503.20px;transform:translateX(-50%) scaleX(0.88)">800</div>
<div class="a ax" style="right:32.5px;top:503.20px;transform-origin:100% 50%">1000</div>
</div></body></html>
